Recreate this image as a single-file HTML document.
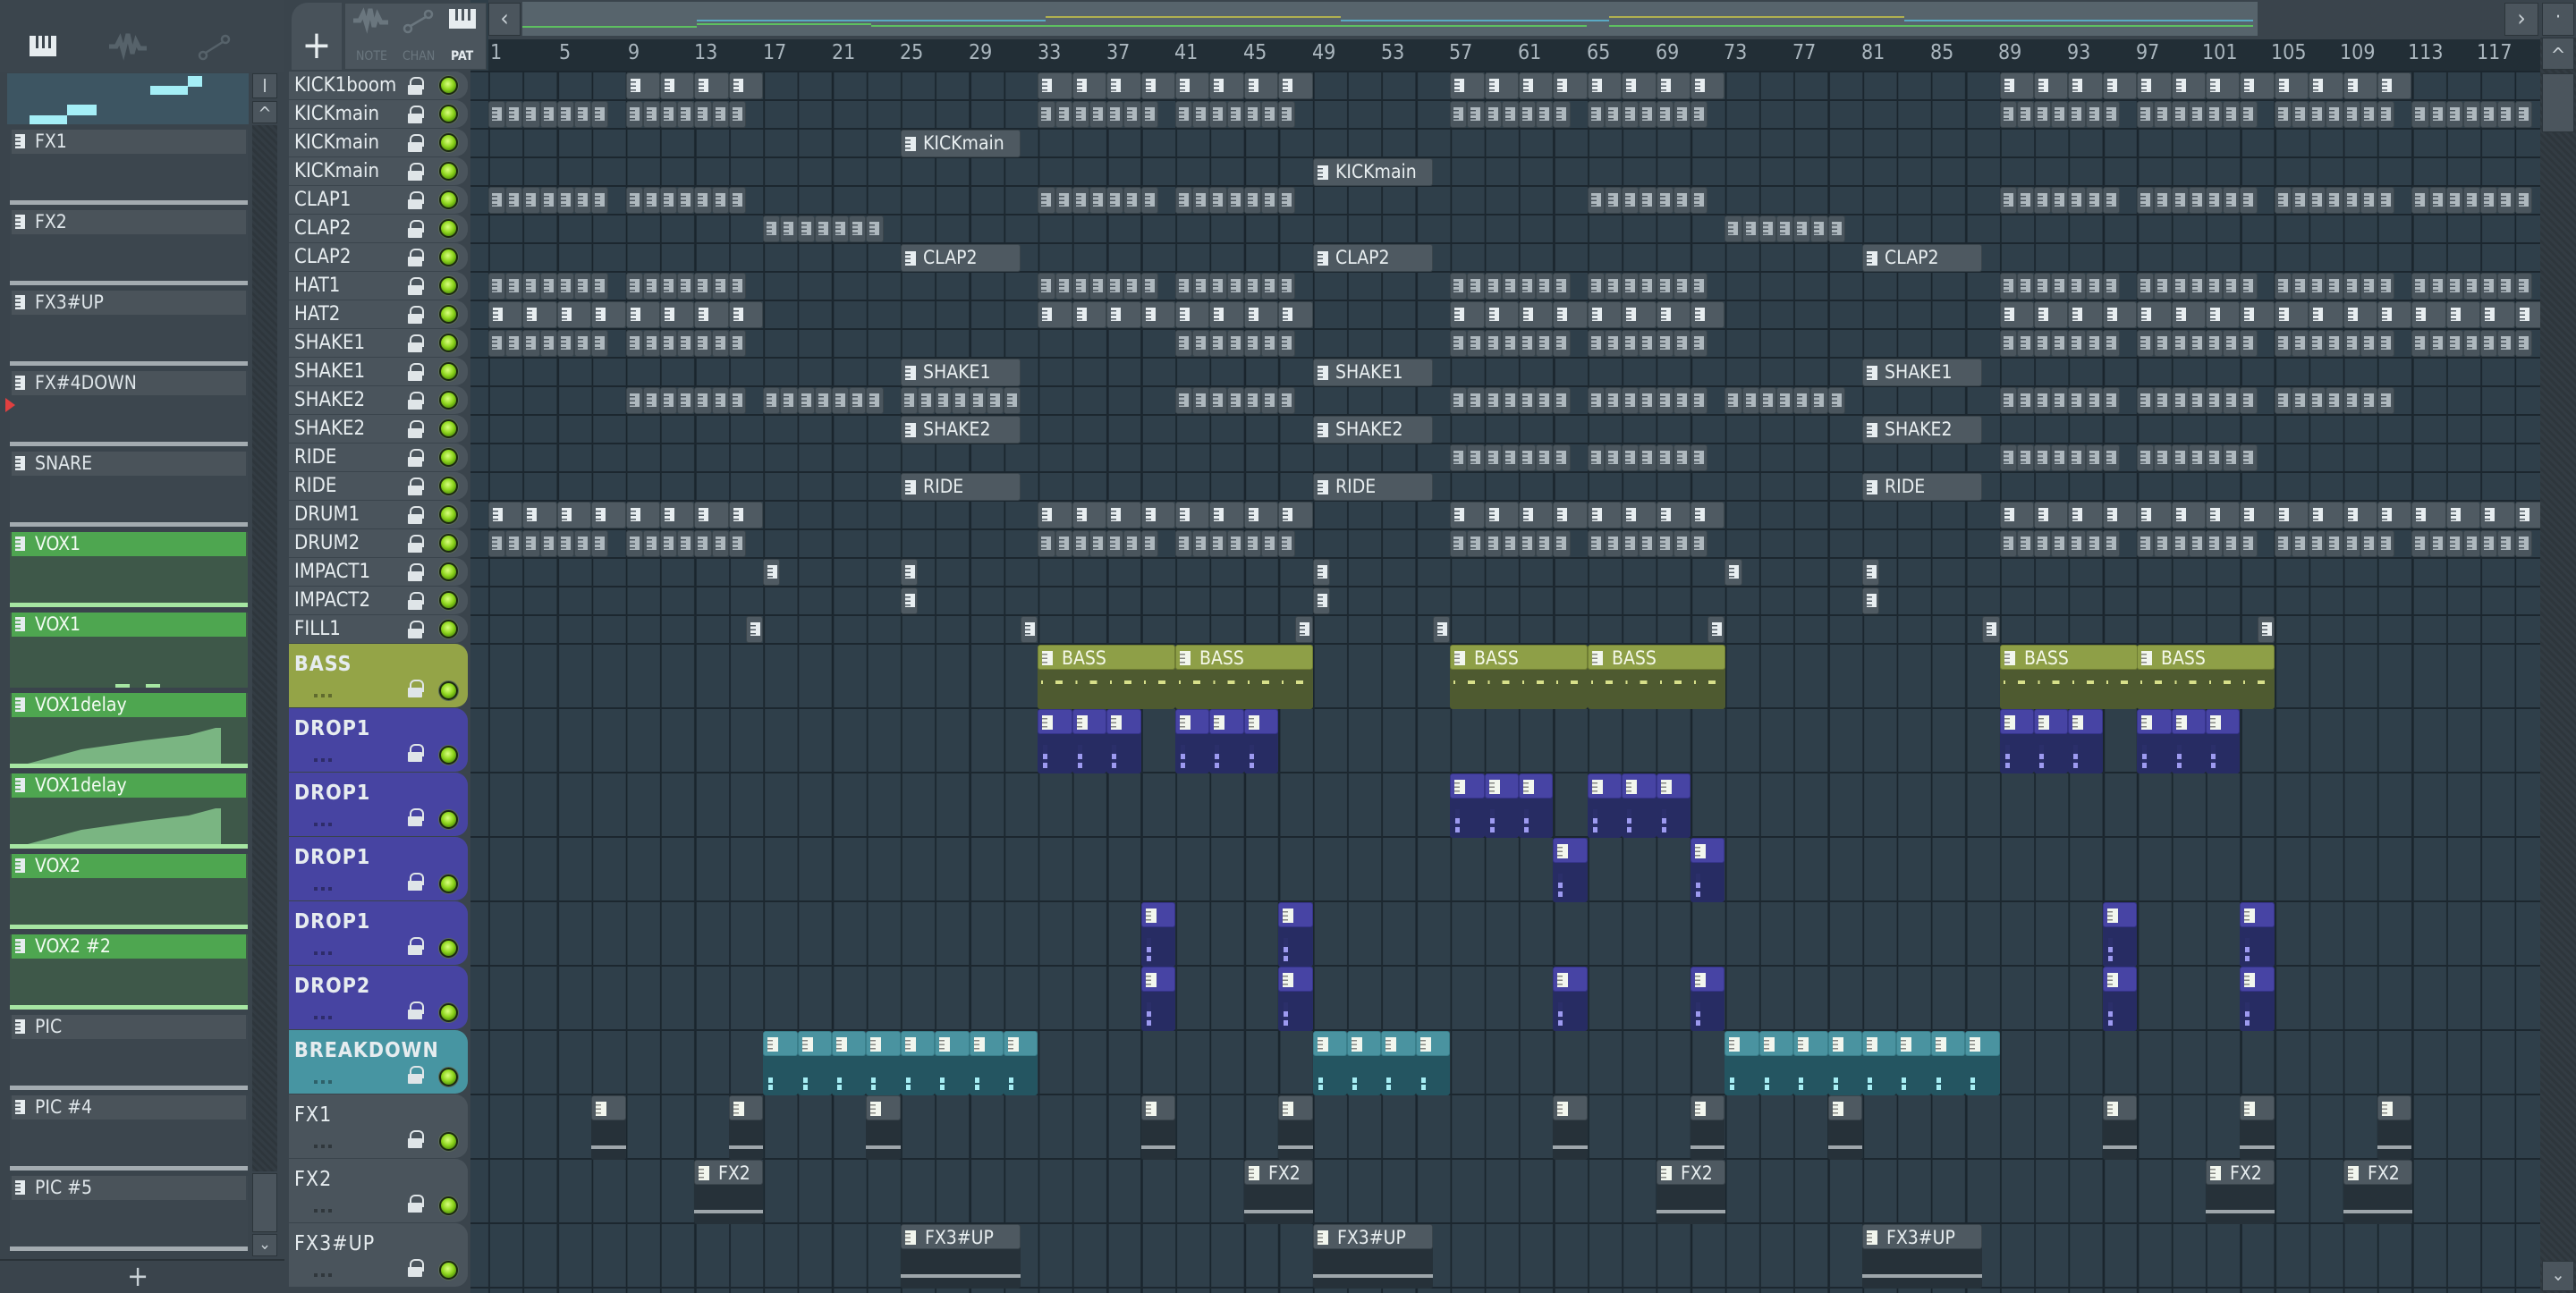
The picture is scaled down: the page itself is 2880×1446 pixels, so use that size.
<!DOCTYPE html>
<html><head><meta charset="utf-8">
<style>
*{box-sizing:border-box;margin:0;padding:0}
body{width:2880px;height:1446px;overflow:hidden;background:#2f3e48;font-family:"DejaVu Sans Condensed","Liberation Sans Narrow","Liberation Sans",sans-serif;font-stretch:condensed;position:relative;color:#e4eaee}
.a{position:absolute}
#lp{left:0;top:0;width:318px;height:1446px;background:#3a444c}
#grid{left:526px;top:80px;width:2314px;height:1366px;background-color:#2f3f4a;
background-image:repeating-linear-gradient(90deg,transparent 0,transparent 19px,#1a252d 19px,#1a252d 21px,transparent 21px,transparent 38.4px);background-position:1px 0}
.hl{position:absolute;left:526px;width:2314px;height:2px;background:#1c272f}
.th{position:absolute;left:323px;width:200px;background:#4a545c;border-radius:0 14px 14px 0;font-size:22px;color:#e6ecef}
.th .n{position:absolute;left:6px;top:3px}
.lk{position:absolute;width:16px;height:20px}
.lk::before{content:"";position:absolute;left:2px;top:0;width:12px;height:12px;border:2.5px solid #dfe5e8;border-bottom:none;border-radius:6px 6px 0 0}
.lk::after{content:"";position:absolute;left:0;top:9px;width:16px;height:11px;background:#dfe5e8;border-radius:1px}
.led{position:absolute;width:21px;height:21px;border-radius:50%;background:radial-gradient(circle at 45% 40%,#d8ff80 0,#8fd61e 45%,#4e8c0a 80%);border:2px solid #1c2a10;box-shadow:0 0 0 1px #5a6a5a}
.tt .n{top:10px;font-size:23px;font-weight:bold;letter-spacing:1px}
.dots{position:absolute;left:28px;top:56px;width:20px;height:4px;background:repeating-linear-gradient(90deg,rgba(0,0,0,.35) 0 4px,transparent 4px 8px)}
.b{position:absolute;background:#4f5a62;border:1px solid #3a454c;border-radius:3px;height:30px}
.b::before{content:"";position:absolute;left:4px;top:6px;width:11px;height:15px;background:#e8eef1}
.b::after{content:"";position:absolute;left:4px;top:6px;width:6px;height:15px;background:repeating-linear-gradient(180deg,transparent 0 3px,#4f5a62 3px 4.5px)}
.d{background:#4a555d}
.d::before{background:#aeb8be;left:3px;width:11px}
.d::after{left:3px;background:repeating-linear-gradient(180deg,transparent 0 3px,#4a555d 3px 4.5px)}
.lb{position:absolute;background:#4e5961;border:1px solid #3a454c;border-radius:3px;height:31px;font-size:21px;padding-left:24px;line-height:29px;color:#e8eef0;white-space:nowrap;overflow:hidden}
.lb::before{content:"";position:absolute;left:4px;top:7px;width:12px;height:16px;background:#e8eef1}
.lb::after{content:"";position:absolute;left:4px;top:7px;width:6px;height:16px;background:repeating-linear-gradient(180deg,transparent 0 3px,#4e5961 3px 4.5px)}
.T{position:absolute;height:72px;border-radius:3px;overflow:hidden}
.T .h{position:absolute;left:0;top:0;right:0;height:28px;border-radius:3px;font-size:21px;line-height:28px;padding-left:26px;white-space:nowrap;color:#f4f8e8}
.T .h::before{content:"";position:absolute;left:4px;top:6px;width:12px;height:16px;background:#f2f6ee}
.T .h::after{content:"";position:absolute;left:4px;top:6px;width:6px;height:16px;background:repeating-linear-gradient(180deg,transparent 0 3px,rgba(0,0,0,.45) 3px 4.5px)}
.bass{background:#4e5a30}.bass .h{background:#8e9f47;border:1px solid #6f7d33}
.bass .m{position:absolute;left:0;right:0;top:40px;height:4px;background:repeating-linear-gradient(90deg,transparent 0 4px,#d8e08a 4px 6px,transparent 6px 20px,#d8e08a 20px 28px,transparent 28px 38.4px)}
.drop{background:#272c63}.drop .h{background:#4744a4;border:1px solid #36348a}
.drop .m{position:absolute;left:6px;top:40px;width:5px;height:26px;background:linear-gradient(#2b2f6a 0 10px,#9d9af0 10px 16px,#2b2f6a 16px 20px,#9d9af0 20px 26px)}
.brk{background:#245561}.brk .h{background:#4a93a0;border:1px solid #3a7f8b}
.brk .m{position:absolute;left:6px;top:40px;width:5px;height:26px;background:linear-gradient(#245561 0 12px,#a6eef4 12px 18px,#245561 18px 20px,#a6eef4 20px 26px)}
.gry{background:#263139}.gry .h{background:#4e5961;border:1px solid #3a454c;color:#e8eef0}
.gry .m{position:absolute;left:0;right:0;top:56px;height:4px;background:#9ea6ab}
.li{position:absolute;left:11px;width:266px;height:84px;background:#3c464e}
.li .hd{position:absolute;left:2px;right:2px;top:0;height:27px;background:#4a535a;font-size:21px;line-height:27px;padding-left:26px;color:#dfe6ea}
.li .hd::before{content:"";position:absolute;left:4px;top:5px;width:11px;height:16px;background:#e6ecef}
.li .hd::after{content:"";position:absolute;left:4px;top:5px;width:6px;height:16px;background:repeating-linear-gradient(180deg,transparent 0 3px,#4a535a 3px 4.5px)}
.li .ln{position:absolute;left:0;right:0;bottom:0;height:5px;background:#a3abb0}
.li.g{background:#3e5849}.li.g .hd{background:#4ea650;color:#f2fbf2}
.li.g .hd::after{background:repeating-linear-gradient(180deg,transparent 0 3px,#4ea650 3px 4.5px)}
.li.g .ln{background:#a6e6a2}
.rn{position:absolute;top:46px;font-size:23px;color:#aab6be}
.btn{position:absolute;background:#4b555d;border:1px solid #2c353b;color:#c8d0d5;text-align:center}
</style></head><body>

<div id="lp" class="a"></div>
<div class="a" style="left:0;top:0;width:318px;height:80px;background:#3b454d"></div>
<div class="a" style="left:33px;top:40px;width:30px;height:23px;background:#e6ecef"></div>
<div class="a" style="left:40px;top:40px;width:3px;height:14px;background:#3b454d"></div>
<div class="a" style="left:47px;top:40px;width:3px;height:14px;background:#3b454d"></div>
<div class="a" style="left:54px;top:40px;width:3px;height:14px;background:#3b454d"></div>
<svg class="a" style="left:120px;top:36px" width="46" height="32"><path d="M2 16h8l4-8 4 14 5-20 5 22 4-14 4 8h8" stroke="#56626a" stroke-width="5" fill="none"/></svg>
<svg class="a" style="left:220px;top:38px" width="40" height="30"><circle cx="7" cy="24" r="4" stroke="#56626a" stroke-width="2.5" fill="none"/><circle cx="32" cy="6" r="4" stroke="#56626a" stroke-width="2.5" fill="none"/><path d="M10 21L29 9" stroke="#56626a" stroke-width="2.5"/></svg>
<div class="a" style="left:8px;top:82px;width:270px;height:57px;background:#3d5562"></div>
<div class="a" style="left:33px;top:129px;width:42px;height:10px;background:#a4eef6"></div>
<div class="a" style="left:75px;top:117px;width:33px;height:12px;background:#a4eef6"></div>
<div class="a" style="left:168px;top:96px;width:42px;height:10px;background:#a4eef6"></div>
<div class="a" style="left:210px;top:85px;width:16px;height:12px;background:#a4eef6"></div>
<div class="btn" style="left:282px;top:82px;width:28px;height:28px;font-size:20px;line-height:26px">I</div>
<div class="btn" style="left:282px;top:113px;width:28px;height:25px;font-size:20px;line-height:26px">^</div>
<div class="a" style="left:282px;top:140px;width:28px;height:1170px;background:repeating-linear-gradient(45deg,#333c43 0 3px,#2e363c 3px 6px)"></div>
<div class="btn" style="left:282px;top:1312px;width:28px;height:66px"></div>
<div class="btn" style="left:282px;top:1380px;width:28px;height:25px;font-size:18px;line-height:22px">⌄</div>
<div class="a" style="left:0;top:1408px;width:318px;height:38px;background:#3a444c;border-top:2px solid #2a3238;font-size:32px;text-align:center;line-height:34px;color:#c8d0d5;padding-right:10px">+</div>

<div class="li" style="top:145px"><div class="hd">FX1</div><div class="ln"></div></div>
<div class="li" style="top:235px"><div class="hd">FX2</div><div class="ln"></div></div>
<div class="li" style="top:325px"><div class="hd">FX3#UP</div><div class="ln"></div></div>
<div class="li" style="top:415px"><div class="hd">FX#4DOWN</div><div class="ln"></div></div>
<div class="a" style="left:6px;top:445px;width:0;height:0;border-left:11px solid #e04040;border-top:8px solid transparent;border-bottom:8px solid transparent"></div>
<div class="li" style="top:505px"><div class="hd">SNARE</div><div class="ln"></div></div>
<div class="li g" style="top:595px"><div class="hd">VOX1</div><div class="ln"></div></div>
<div class="li g" style="top:685px"><div class="hd">VOX1</div><div class="a" style="left:118px;top:80px;width:16px;height:4px;background:#a6e6a2"></div><div class="a" style="left:152px;top:80px;width:16px;height:4px;background:#a6e6a2"></div></div>
<div class="li g" style="top:775px"><div class="hd">VOX1delay</div><svg class="a" style="left:0;top:27px" width="266" height="57"><path d="M20 52L80 36 150 26 200 20 230 12 236 12 236 52Z" fill="#7ab582"/></svg><div class="ln"></div></div>
<div class="li g" style="top:865px"><div class="hd">VOX1delay</div><svg class="a" style="left:0;top:27px" width="266" height="57"><path d="M20 52L80 36 150 26 200 20 230 12 236 12 236 52Z" fill="#7ab582"/></svg><div class="ln"></div></div>
<div class="li g" style="top:955px"><div class="hd">VOX2</div><div class="ln"></div></div>
<div class="li g" style="top:1045px"><div class="hd">VOX2 #2</div><div class="ln"></div></div>
<div class="li" style="top:1135px"><div class="hd">PIC</div><div class="ln"></div></div>
<div class="li" style="top:1225px"><div class="hd">PIC #4</div><div class="ln"></div></div>
<div class="li" style="top:1315px"><div class="hd">PIC #5</div><div class="ln"></div></div>

<div class="a" style="left:318px;top:0;width:208px;height:1446px;background:#3a444c"></div>
<div class="a" style="left:326px;top:3px;width:56px;height:75px;background:#48525a;border-radius:18px 0 0 0;font-size:44px;text-align:center;line-height:96px;color:#e8eef0">+</div>
<div class="a" style="left:385px;top:3px;width:159px;height:75px;background:#4b555d;border:1px solid #3a444b"></div>
<svg class="a" style="left:393px;top:8px" width="44" height="30"><path d="M2 15h7l4-8 4 13 4-18 4 20 4-13 4 8h8" stroke="#6a767e" stroke-width="5" fill="none"/></svg>
<svg class="a" style="left:450px;top:10px" width="36" height="28"><circle cx="6" cy="22" r="4" stroke="#6a767e" stroke-width="2.5" fill="none"/><circle cx="29" cy="6" r="4" stroke="#6a767e" stroke-width="2.5" fill="none"/><path d="M9 19L26 9" stroke="#6a767e" stroke-width="2.5"/></svg>
<div class="a" style="left:502px;top:10px;width:30px;height:22px;background:#e6ecef"></div>
<div class="a" style="left:509px;top:10px;width:3px;height:13px;background:#4b555d"></div>
<div class="a" style="left:516px;top:10px;width:3px;height:13px;background:#4b555d"></div>
<div class="a" style="left:523px;top:10px;width:3px;height:13px;background:#4b555d"></div>
<div class="a" style="left:398px;top:55px;font-size:14px;color:#6a767e">NOTE</div>
<div class="a" style="left:450px;top:55px;font-size:14px;color:#6a767e">CHAN</div>
<div class="a" style="left:504px;top:55px;font-size:14px;color:#e4eaee;font-weight:bold">PAT</div>

<div class="a" style="left:546px;top:0;width:2334px;height:44px;background:#3a444c"></div>
<div class="btn" style="left:546px;top:3px;width:36px;height:37px;font-size:26px;line-height:34px">‹</div>
<div class="a" style="left:584px;top:2px;width:1940px;height:38px;background:#57646c"></div>
<div class="a" style="left:584px;top:29px;width:195px;height:2px;background:#5ec060"></div>
<div class="a" style="left:779px;top:26px;width:195px;height:2px;background:#5ec060"></div>
<div class="a" style="left:779px;top:22px;width:195px;height:2px;background:#5aaac4"></div>
<div class="a" style="left:974px;top:28px;width:800px;height:2px;background:#5ec060"></div>
<div class="a" style="left:974px;top:22px;width:195px;height:2px;background:#5aaac4"></div>
<div class="a" style="left:1169px;top:18px;width:330px;height:2px;background:#b0b050"></div>
<div class="a" style="left:1499px;top:22px;width:300px;height:2px;background:#5aaac4"></div>
<div class="a" style="left:1799px;top:18px;width:330px;height:2px;background:#b0b050"></div>
<div class="a" style="left:1799px;top:28px;width:720px;height:2px;background:#5ec060"></div>
<div class="a" style="left:2129px;top:22px;width:390px;height:2px;background:#5aaac4"></div>
<div class="btn" style="left:2800px;top:3px;width:38px;height:37px;font-size:26px;line-height:34px">›</div>
<div class="btn" style="left:2842px;top:3px;width:36px;height:37px;font-size:22px;line-height:32px">·</div>
<div class="a" style="left:546px;top:44px;width:2294px;height:36px;background:#222e36"></div>

<div id="grid" class="a"></div>
<div id="rows"></div>
<div class="a" style="left:2840px;top:42px;width:40px;height:1404px;background:repeating-linear-gradient(45deg,#333c43 0 3px,#2e363c 3px 6px)"></div>
<div class="btn" style="left:2842px;top:42px;width:36px;height:36px;font-size:22px;line-height:40px">^</div>
<div class="btn" style="left:2842px;top:82px;width:36px;height:66px"></div>
<div class="btn" style="left:2842px;top:1410px;width:36px;height:34px;font-size:20px;line-height:28px">⌄</div>

<div id="ruler">
<div class="rn" style="left:548px">1</div><div class="rn" style="left:625px">5</div><div class="rn" style="left:702px">9</div><div class="rn" style="left:776px">13</div><div class="rn" style="left:853px">17</div><div class="rn" style="left:930px">21</div><div class="rn" style="left:1006px">25</div><div class="rn" style="left:1083px">29</div><div class="rn" style="left:1160px">33</div><div class="rn" style="left:1237px">37</div><div class="rn" style="left:1313px">41</div><div class="rn" style="left:1390px">45</div><div class="rn" style="left:1467px">49</div><div class="rn" style="left:1544px">53</div><div class="rn" style="left:1620px">57</div><div class="rn" style="left:1697px">61</div><div class="rn" style="left:1774px">65</div><div class="rn" style="left:1851px">69</div><div class="rn" style="left:1927px">73</div><div class="rn" style="left:2004px">77</div><div class="rn" style="left:2081px">81</div><div class="rn" style="left:2158px">85</div><div class="rn" style="left:2234px">89</div><div class="rn" style="left:2311px">93</div><div class="rn" style="left:2388px">97</div><div class="rn" style="left:2462px">101</div><div class="rn" style="left:2539px">105</div><div class="rn" style="left:2616px">109</div><div class="rn" style="left:2692px">113</div><div class="rn" style="left:2769px">117</div>
</div>

<div class="th" style="top:80px;height:31px"><span class="n">KICK1boom</span><div class="lk" style="left:133px;top:6px"></div><div class="led" style="left:168px;top:5px"></div></div>
<div class="th" style="top:112px;height:31px"><span class="n">KICKmain</span><div class="lk" style="left:133px;top:6px"></div><div class="led" style="left:168px;top:5px"></div></div>
<div class="th" style="top:144px;height:31px"><span class="n">KICKmain</span><div class="lk" style="left:133px;top:6px"></div><div class="led" style="left:168px;top:5px"></div></div>
<div class="th" style="top:176px;height:31px"><span class="n">KICKmain</span><div class="lk" style="left:133px;top:6px"></div><div class="led" style="left:168px;top:5px"></div></div>
<div class="th" style="top:208px;height:31px"><span class="n">CLAP1</span><div class="lk" style="left:133px;top:6px"></div><div class="led" style="left:168px;top:5px"></div></div>
<div class="th" style="top:240px;height:31px"><span class="n">CLAP2</span><div class="lk" style="left:133px;top:6px"></div><div class="led" style="left:168px;top:5px"></div></div>
<div class="th" style="top:272px;height:31px"><span class="n">CLAP2</span><div class="lk" style="left:133px;top:6px"></div><div class="led" style="left:168px;top:5px"></div></div>
<div class="th" style="top:304px;height:31px"><span class="n">HAT1</span><div class="lk" style="left:133px;top:6px"></div><div class="led" style="left:168px;top:5px"></div></div>
<div class="th" style="top:336px;height:31px"><span class="n">HAT2</span><div class="lk" style="left:133px;top:6px"></div><div class="led" style="left:168px;top:5px"></div></div>
<div class="th" style="top:368px;height:31px"><span class="n">SHAKE1</span><div class="lk" style="left:133px;top:6px"></div><div class="led" style="left:168px;top:5px"></div></div>
<div class="th" style="top:400px;height:31px"><span class="n">SHAKE1</span><div class="lk" style="left:133px;top:6px"></div><div class="led" style="left:168px;top:5px"></div></div>
<div class="th" style="top:432px;height:31px"><span class="n">SHAKE2</span><div class="lk" style="left:133px;top:6px"></div><div class="led" style="left:168px;top:5px"></div></div>
<div class="th" style="top:464px;height:31px"><span class="n">SHAKE2</span><div class="lk" style="left:133px;top:6px"></div><div class="led" style="left:168px;top:5px"></div></div>
<div class="th" style="top:496px;height:31px"><span class="n">RIDE</span><div class="lk" style="left:133px;top:6px"></div><div class="led" style="left:168px;top:5px"></div></div>
<div class="th" style="top:528px;height:31px"><span class="n">RIDE</span><div class="lk" style="left:133px;top:6px"></div><div class="led" style="left:168px;top:5px"></div></div>
<div class="th" style="top:560px;height:31px"><span class="n">DRUM1</span><div class="lk" style="left:133px;top:6px"></div><div class="led" style="left:168px;top:5px"></div></div>
<div class="th" style="top:592px;height:31px"><span class="n">DRUM2</span><div class="lk" style="left:133px;top:6px"></div><div class="led" style="left:168px;top:5px"></div></div>
<div class="th" style="top:624px;height:31px"><span class="n">IMPACT1</span><div class="lk" style="left:133px;top:6px"></div><div class="led" style="left:168px;top:5px"></div></div>
<div class="th" style="top:656px;height:31px"><span class="n">IMPACT2</span><div class="lk" style="left:133px;top:6px"></div><div class="led" style="left:168px;top:5px"></div></div>
<div class="th" style="top:688px;height:31px"><span class="n">FILL1</span><div class="lk" style="left:133px;top:6px"></div><div class="led" style="left:168px;top:5px"></div></div>

<div class="th tt" style="top:720px;height:71px;background:#94a447"><span class="n">BASS</span><div class="dots"></div><div class="lk" style="left:133px;top:40px"></div><div class="led" style="left:168px;top:42px"></div></div>
<div class="th tt" style="top:792px;height:71px;background:#4744a2"><span class="n">DROP1</span><div class="dots"></div><div class="lk" style="left:133px;top:40px"></div><div class="led" style="left:168px;top:42px"></div></div>
<div class="th tt" style="top:864px;height:71px;background:#4744a2"><span class="n">DROP1</span><div class="dots"></div><div class="lk" style="left:133px;top:40px"></div><div class="led" style="left:168px;top:42px"></div></div>
<div class="th tt" style="top:936px;height:71px;background:#4744a2"><span class="n">DROP1</span><div class="dots"></div><div class="lk" style="left:133px;top:40px"></div><div class="led" style="left:168px;top:42px"></div></div>
<div class="th tt" style="top:1008px;height:71px;background:#4744a2"><span class="n">DROP1</span><div class="dots"></div><div class="lk" style="left:133px;top:40px"></div><div class="led" style="left:168px;top:42px"></div></div>
<div class="th tt" style="top:1080px;height:71px;background:#4744a2"><span class="n">DROP2</span><div class="dots"></div><div class="lk" style="left:133px;top:40px"></div><div class="led" style="left:168px;top:42px"></div></div>
<div class="th tt" style="top:1152px;height:71px;background:#4795a2"><span class="n">BREAKDOWN</span><div class="dots"></div><div class="lk" style="left:133px;top:40px"></div><div class="led" style="left:168px;top:42px"></div></div>
<div class="th tt" style="top:1224px;height:71px"><span class="n" style="font-weight:normal">FX1</span><div class="dots"></div><div class="lk" style="left:133px;top:40px"></div><div class="led" style="left:168px;top:42px"></div></div>
<div class="th tt" style="top:1296px;height:71px"><span class="n" style="font-weight:normal">FX2</span><div class="dots"></div><div class="lk" style="left:133px;top:40px"></div><div class="led" style="left:168px;top:42px"></div></div>
<div class="th tt" style="top:1368px;height:71px"><span class="n" style="font-weight:normal">FX3#UP</span><div class="dots"></div><div class="lk" style="left:133px;top:40px"></div><div class="led" style="left:168px;top:42px"></div></div>

<div class="lb" style="left:1007px;top:145px;width:134px">KICKmain</div>
<div class="lb" style="left:1468px;top:177px;width:134px">KICKmain</div>
<div class="lb" style="left:1007px;top:273px;width:134px">CLAP2</div>
<div class="lb" style="left:1468px;top:273px;width:134px">CLAP2</div>
<div class="lb" style="left:2082px;top:273px;width:134px">CLAP2</div>
<div class="lb" style="left:1007px;top:401px;width:134px">SHAKE1</div>
<div class="lb" style="left:1468px;top:401px;width:134px">SHAKE1</div>
<div class="lb" style="left:2082px;top:401px;width:134px">SHAKE1</div>
<div class="lb" style="left:1007px;top:465px;width:134px">SHAKE2</div>
<div class="lb" style="left:1468px;top:465px;width:134px">SHAKE2</div>
<div class="lb" style="left:2082px;top:465px;width:134px">SHAKE2</div>
<div class="lb" style="left:1007px;top:529px;width:134px">RIDE</div>
<div class="lb" style="left:1468px;top:529px;width:134px">RIDE</div>
<div class="lb" style="left:2082px;top:529px;width:134px">RIDE</div>

<div class="T bass" style="left:1160px;top:721px;width:154px"><div class="h">BASS</div><div class="m"></div></div>
<div class="T bass" style="left:1314px;top:721px;width:154px"><div class="h">BASS</div><div class="m"></div></div>
<div class="T bass" style="left:1621px;top:721px;width:154px"><div class="h">BASS</div><div class="m"></div></div>
<div class="T bass" style="left:1775px;top:721px;width:154px"><div class="h">BASS</div><div class="m"></div></div>
<div class="T bass" style="left:2236px;top:721px;width:154px"><div class="h">BASS</div><div class="m"></div></div>
<div class="T bass" style="left:2389px;top:721px;width:154px"><div class="h">BASS</div><div class="m"></div></div>

<div class="T gry" style="left:776px;top:1297px;width:77px"><div class="h">FX2</div><div class="m"></div></div>
<div class="T gry" style="left:1391px;top:1297px;width:77px"><div class="h">FX2</div><div class="m"></div></div>
<div class="T gry" style="left:1852px;top:1297px;width:77px"><div class="h">FX2</div><div class="m"></div></div>
<div class="T gry" style="left:2466px;top:1297px;width:77px"><div class="h">FX2</div><div class="m"></div></div>
<div class="T gry" style="left:2620px;top:1297px;width:77px"><div class="h">FX2</div><div class="m"></div></div>
<div class="T gry" style="left:1007px;top:1369px;width:134px"><div class="h">FX3#UP</div><div class="m"></div></div>
<div class="T gry" style="left:1468px;top:1369px;width:134px"><div class="h">FX3#UP</div><div class="m"></div></div>
<div class="T gry" style="left:2082px;top:1369px;width:134px"><div class="h">FX3#UP</div><div class="m"></div></div>

<script>
(function(){
var X=function(b){return 546+(b-1)*19.2;};
var Y=function(r){return r<20?80+32*r:720+72*(r-20);};
var out=[];
for(var r=0;r<=30;r++){out.push('<div class="hl" style="top:'+(Y(r)-1)+'px"></div>');}
function single(r,b,len){out.push('<div class="b" style="left:'+X(b).toFixed(1)+'px;top:'+(Y(r)+1)+'px;width:'+(19.2*len).toFixed(1)+'px"></div>');}
function dense(r,b){for(var i=0;i<7;i++)out.push('<div class="b d" style="left:'+X(b+i).toFixed(1)+'px;top:'+(Y(r)+1)+'px;width:19.2px"></div>');}
function odd(a,z){var o=[];for(var i=a;i<=z;i+=2)o.push(i);return o;}
function T(r,b,len,cls){out.push('<div class="T '+cls+'" style="left:'+X(b).toFixed(1)+'px;top:'+(Y(r)+1)+'px;width:'+(19.2*len).toFixed(1)+'px"><div class="h"></div><div class="m"></div></div>');}
[].concat(odd(9,15),odd(33,47),odd(57,71),odd(89,111)).forEach(function(b){single(0,b,2);});
[].concat(odd(1,15),odd(33,47),odd(57,71),odd(89,119)).forEach(function(b){single(8,b,2);single(15,b,2);});
[1,9,33,41,57,65,89,97,105,113].forEach(function(b){dense(1,b);dense(7,b);dense(16,b);});
[1,9,33,41,65,89,97,105,113].forEach(function(b){dense(4,b);});
[17,73].forEach(function(b){dense(5,b);});
[1,9,41,57,65,89,97,105,113].forEach(function(b){dense(9,b);});
[9,17,25,41,57,65,73,89,97,105].forEach(function(b){dense(11,b);});
[57,65,89,97].forEach(function(b){dense(13,b);});
[17,25,49,73,81].forEach(function(b){single(17,b,1);});
[25,49,81].forEach(function(b){single(18,b,1);});
[16,32,48,56,72,88,104].forEach(function(b){single(19,b,1);});
[33,35,37,41,43,45,89,91,93,97,99,101].forEach(function(b){T(21,b,2,'drop');});
[57,59,61,65,67,69].forEach(function(b){T(22,b,2,'drop');});
[63,71].forEach(function(b){T(23,b,2,'drop');});
[39,47,95,103].forEach(function(b){T(24,b,2,'drop');});
[39,47,63,71,95,103].forEach(function(b){T(25,b,2,'drop');});
[].concat(odd(17,31),odd(49,55),odd(73,87)).forEach(function(b){T(26,b,2,'brk');});
[7,15,23,39,47,63,71,79,95,103,111].forEach(function(b){T(27,b,2,'gry');});
var d=document.createElement('div');d.innerHTML=out.join('');
document.getElementById('rows').appendChild(d);
})();
</script>
</body></html>
